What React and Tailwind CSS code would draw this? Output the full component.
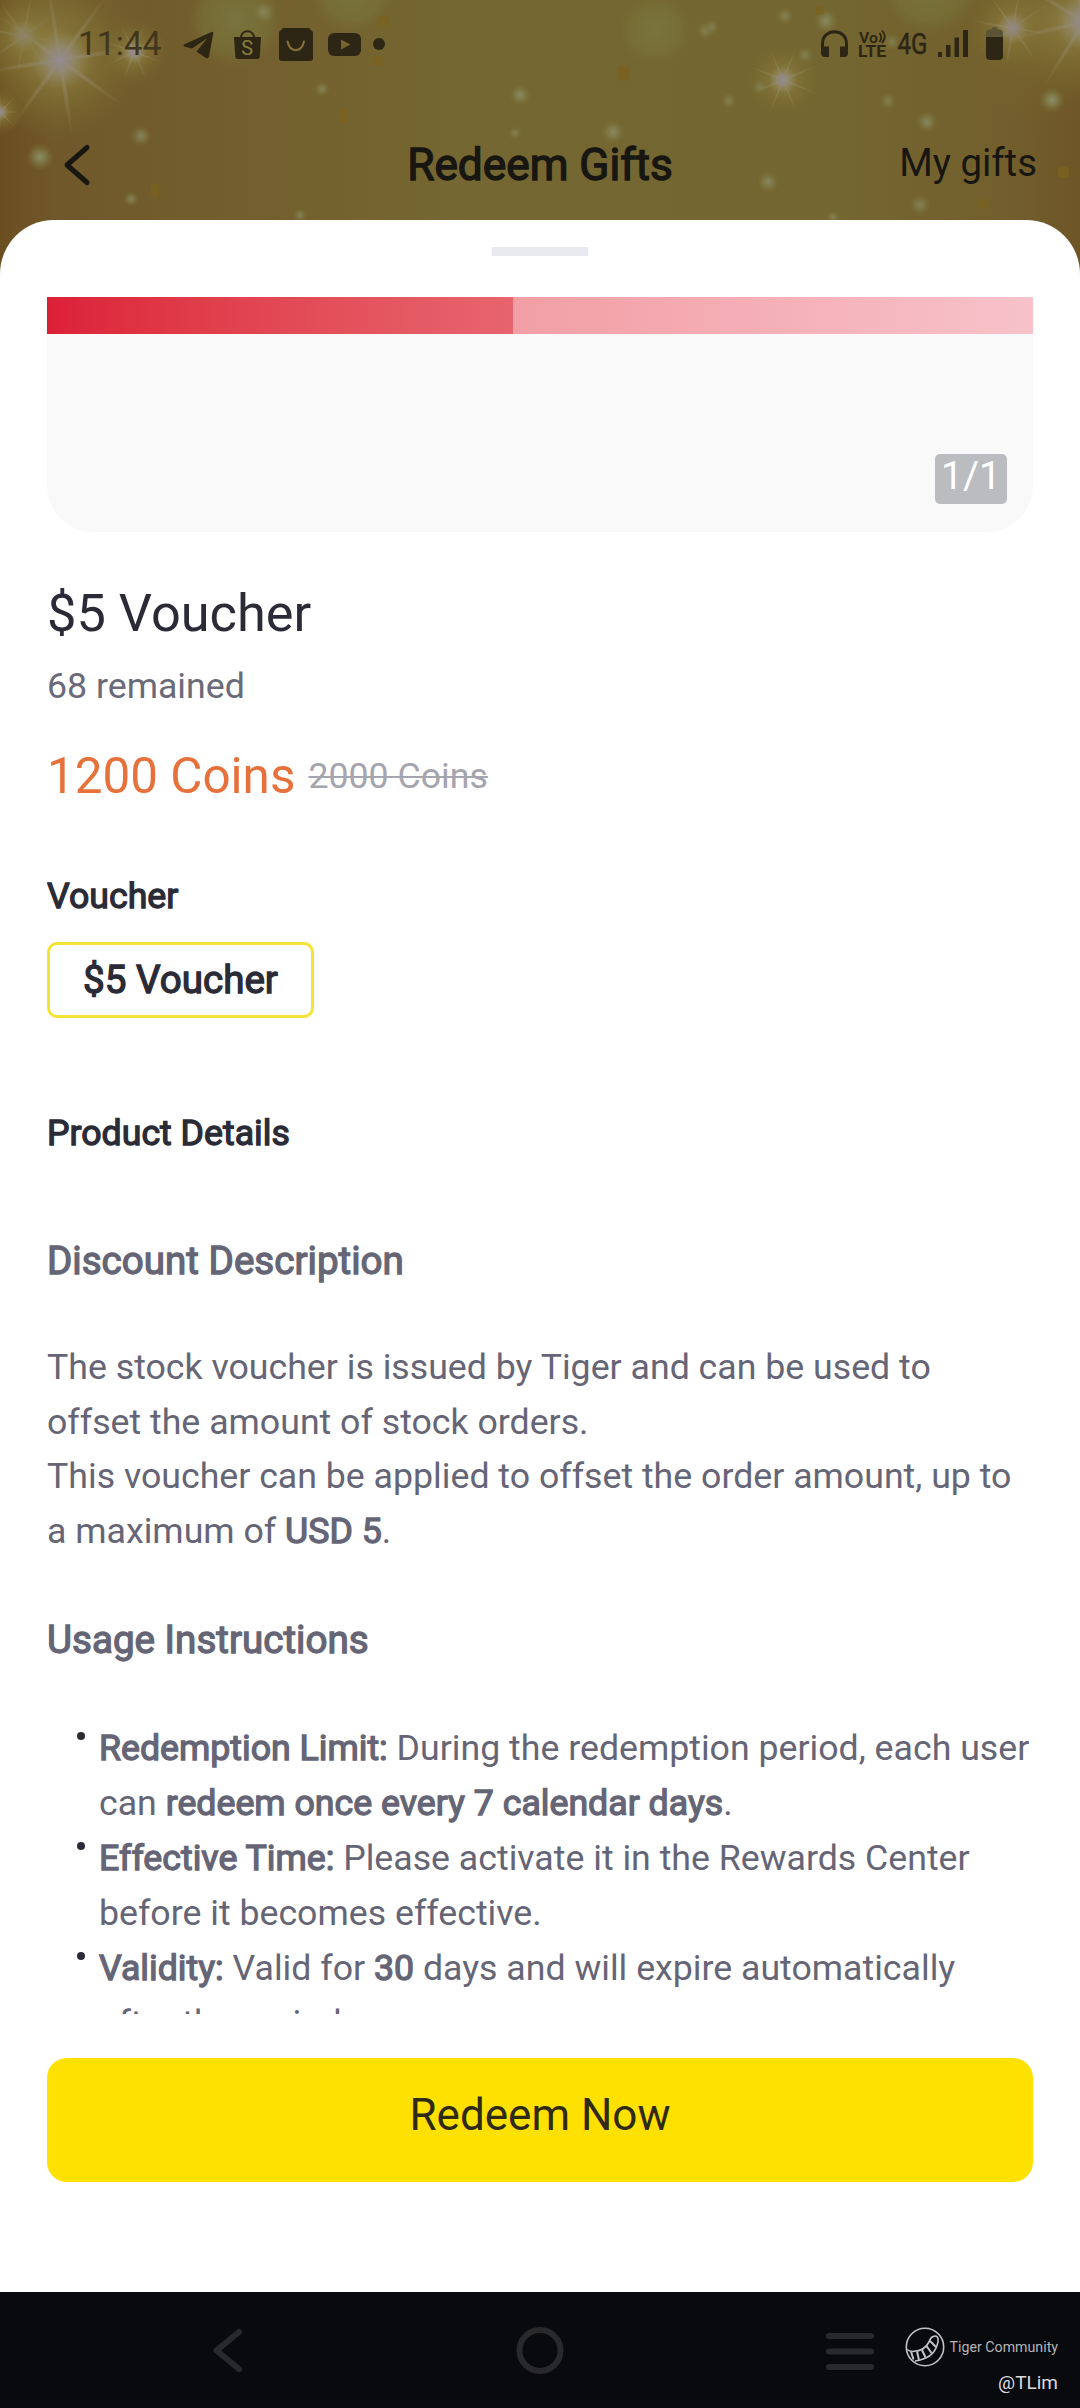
const DARK = '#2e2615'

// x, y, radius, opacity of the soft light dots behind the header
const sparkles = [
  [40, 157, 14, 0.8],
  [141, 136, 11, 0.6],
  [131, 199, 8, 0.6],
  [322, 89, 8, 0.6],
  [300, 215, 7, 0.55],
  [520, 95, 11, 0.7],
  [515, 133, 7, 0.5],
  [613, 132, 12, 0.7],
  [768, 182, 11, 0.65],
  [729, 101, 8, 0.45],
  [927, 122, 11, 0.7],
  [920, 205, 11, 0.55],
  [1052, 100, 13, 0.85],
  [888, 101, 9, 0.45],
  [833, 217, 7, 0.5],
  [705, 31, 9, 0.45],
  [712, 27, 8, 0.4],
  [785, 16, 9, 0.5],
  [826, 21, 12, 0.7],
  [805, 55, 9, 0.45],
  [892, 42, 9, 0.45],
  [760, 87, 8, 0.4],
  [264, 12, 12, 0.55],
]

const confetti = [
  [339, 108, 9, 15],
  [151, 184, 8, 13],
  [378, 16, 12, 10],
  [372, 56, 12, 10],
  [618, 66, 11, 15],
  [815, 6, 9, 9],
  [1058, 167, 11, 11],
  [977, 199, 11, 9],
]

const Star = ({ x, y, r, rotate = 0 }) => (
  <g transform={`translate(${x} ${y}) rotate(${rotate})`}>
    <circle r={r} fill="url(#halo)" />
    {[0, 45, 90, 135].map((a) => (
      <ellipse key={a} rx={r * 0.95} ry={r * 0.04} fill="url(#ray)" transform={`rotate(${a})`} />
    ))}
    <circle r={r * 0.36} fill="url(#core)" />
  </g>
)

const Backdrop = () => (
  <svg className="absolute inset-0" width="1080" height="290" viewBox="0 0 1080 290">
    <defs>
      <linearGradient id="gold">
        <stop offset="0" stopColor="#6a4e20" />
        <stop offset="0.05" stopColor="#70582a" />
        <stop offset="0.25" stopColor="#73602e" />
        <stop offset="0.42" stopColor="#756731" />
        <stop offset="0.78" stopColor="#746631" />
        <stop offset="0.94" stopColor="#725e2c" />
        <stop offset="1" stopColor="#6e5526" />
      </linearGradient>
      <radialGradient id="halo">
        <stop offset="0" stopColor="#98905a" stopOpacity="0.85" />
        <stop offset="0.4" stopColor="#88793a" stopOpacity="0.55" />
        <stop offset="1" stopColor="#78682c" stopOpacity="0" />
      </radialGradient>
      <radialGradient id="ray">
        <stop offset="0" stopColor="#98907c" stopOpacity="0.75" />
        <stop offset="0.6" stopColor="#8f8460" stopOpacity="0.4" />
        <stop offset="1" stopColor="#8c8050" stopOpacity="0" />
      </radialGradient>
      <radialGradient id="core">
        <stop offset="0" stopColor="#938b92" />
        <stop offset="0.4" stopColor="#938a80" stopOpacity="0.7" />
        <stop offset="1" stopColor="#928858" stopOpacity="0" />
      </radialGradient>
      <radialGradient id="dot">
        <stop offset="0" stopColor="#8c916c" />
        <stop offset="0.45" stopColor="#868555" stopOpacity="0.65" />
        <stop offset="1" stopColor="#7c743a" stopOpacity="0" />
      </radialGradient>
      <radialGradient id="bokeh">
        <stop offset="0" stopColor="#7a7740" stopOpacity="0.85" />
        <stop offset="0.7" stopColor="#787239" stopOpacity="0.6" />
        <stop offset="1" stopColor="#776b33" stopOpacity="0" />
      </radialGradient>
    </defs>
    <rect width="1080" height="290" fill="url(#gold)" />
    <circle cx="236" cy="20" r="48" fill="url(#bokeh)" />
    <circle cx="352" cy="-8" r="42" fill="url(#bokeh)" />
    <circle cx="655" cy="30" r="36" fill="url(#bokeh)" />
    <circle cx="930" cy="-14" r="50" fill="url(#bokeh)" />
    <circle cx="40" cy="30" r="110" fill="url(#halo)" opacity="0.45" />
    <circle cx="1050" cy="20" r="110" fill="url(#halo)" opacity="0.45" />
    <Star x={24} y={36} r={44} rotate={10} />
    <Star x={60} y={60} r={82} rotate={36} />
    <Star x={134} y={52} r={34} rotate={20} />
    <Star x={0} y={112} r={24} />
    <Star x={783} y={80} r={38} rotate={22} />
    <Star x={1013} y={28} r={44} rotate={10} />
    <Star x={1084} y={22} r={80} rotate={32} />
    {sparkles.map(([x, y, r, o]) => (
      <circle key={`${x}-${y}`} cx={x} cy={y} r={r} fill="url(#dot)" opacity={o + 0.15} />
    ))}
    {confetti.map(([x, y, w, h]) => (
      <rect key={`${x}-${y}`} x={x} y={y} width={w} height={h} rx="3" fill="#7c621c" opacity="0.7" />
    ))}
  </svg>
)

const StatusBar = () => (
  <div className="flex h-[88px] items-center justify-between pr-[74px] pl-[78px]">
    <div className="flex items-center">
      <span className="w-[105px] text-[33.5px] leading-[40px] text-[#3f361c]">11:44</span>
      <svg width="204" height="40" viewBox="183 24 204 40" fill={DARK}>
        <path d="M184 44.500 211.500 32q2-.6 1.700 1.500L209 56.500q-.8 2.500-3 1.500L196.500 51.500 207 38.500 192 48.500 184 46.500q-1-1 0-2Z" />
        <path d="M234 37h27l-1.200 20q-.2 2-2.300 2h-20q-2 0-2.200-2Z" />
        <path d="M241 38c0-9 13-9 13 0" fill="none" stroke={DARK} strokeWidth="2" />
        <text x="247.3" y="55" fontSize="20" textAnchor="middle" fill="#85803c">S</text>
        <path d="M283 28h26l4 4v26q0 3-3 3h-28q-3 0-3-3V32Z" />
        <path d="M287.500 41.500c2.500 11.500 14 11.500 16.500 0" fill="none" stroke="#85743a" strokeWidth="2" strokeLinecap="round" />
        <rect x="328" y="33" width="33" height="23" rx="6" />
        <path d="m341 39.500 9.500 5-9.500 5Z" fill="#766530" />
        <circle cx="379" cy="44" r="6" />
      </svg>
    </div>
    <svg width="186" height="40" viewBox="820 24 186 40" fill={DARK}>
      <path d="M822.500 50v-6c0-16.500 24-16.500 24 0v6" fill="none" stroke={DARK} strokeWidth="3" />
      <path d="M821 46.500h8V57h-4q-4 0-4-4ZM840 46.500h8V53q0 4-4 4h-4Z" />
      <text x="859" y="42.500" fontSize="15.500" fontWeight="600" textLength="19" lengthAdjust="spacingAndGlyphs">Vo</text>
      <path d="M879.500 33q3.500 4.500 0 9M882 30.500q5.500 6 0 12.500" fill="none" stroke={DARK} strokeWidth="1.800" />
      <text x="858" y="57" fontSize="16" fontWeight="700" textLength="28" lengthAdjust="spacingAndGlyphs">LTE</text>
      <text x="897.500" y="53.500" fontSize="29.500" textLength="30" lengthAdjust="spacingAndGlyphs" stroke={DARK} strokeWidth="0.5">4G</text>
      <path d="M938 52h4v5h-4ZM946 45h4.500v12H946ZM954.500 37.500h4.500v19.500h-4.500ZM963 30h5v27h-5Z" />
      <path d="M986 37v-4q0-3 3-3.500h2.500q0-2.500 2.500-2.500h1q2.500 0 2.500 2.500h2.500q3 .5 3 3.500v4Z" fill="#5c5335" />
      <path d="M986 37h17v19q0 4-4 4h-9q-4 0-4-4Z" />
    </svg>
  </div>
)

const Header = () => (
  <div className="grid grid-cols-[1fr_auto_1fr] items-start px-[43px] pt-[53px]">
    <svg className="ml-[19px]" width="32" height="48" viewBox="62 141 32 48" fill="none" stroke="#171611" strokeWidth="5" strokeLinecap="round" strokeLinejoin="round">
      <path d="M87 147.500 67 165 87 182.500" />
    </svg>
    <h1 className="text-[44.2px] leading-[48px] text-[#171611] [-webkit-text-stroke:1.4px_#171611]">Redeem Gifts</h1>
    <span className="text-right text-[38.4px] leading-[44px] text-[#171611]">My gifts</span>
  </div>
)

const Strong = ({ children }) => (
  <span className="[-webkit-text-stroke:1.3px_currentColor]">{children}</span>
)

const Item = ({ children }) => (
  <li className="relative pl-[52px]">
    <span className="absolute top-[11px] left-[30px] h-2 w-2 rounded-full bg-[#2b2b37]" />
    {children}
  </li>
)

const Sheet = () => (
  <div className="relative mt-[30px] flex h-[2072px] flex-col rounded-t-[54px] bg-white px-[47px] pt-[27px]">
    <div className="h-[9px] w-24 self-center bg-[#e9eaf0]" />

    <div className="-mr-6 mt-[41px] h-[1717px] overflow-hidden pr-6">
      <div className="relative h-[235px] overflow-hidden rounded-b-[46px] bg-[#f9f9f9]">
        <div className="flex h-[37px]">
          <div className="w-[466px] bg-linear-to-r from-[#dc1f38] to-[#e7656e]" />
          <div className="flex-1 bg-linear-to-r from-[#f29ea5] to-[#f7c2ca]" />
        </div>
        <span className="absolute right-[26px] bottom-7 h-[50px] w-[72px] rounded-[5px] bg-[#bbbcc0] text-center text-[39px] leading-[44px] text-white">
          1/1
        </span>
      </div>

      <h2 className="mt-[51px] text-[52.3px] leading-[60px] text-[#2b2b37]">$5 Voucher</h2>
      <p className="mt-[21px] text-[35.7px] leading-[44px] text-[#6a6a79]">68 remained</p>
      <div className="mt-[38px] flex items-center gap-[13px] leading-[60px]">
        <span className="text-[49.4px] text-[#e7713a]">1200 Coins</span>
        <span className="text-[35.7px] text-[#a5a5af] line-through decoration-2">2000 Coins</span>
      </div>

      <h3 className="mt-[68px] text-[35.7px] leading-[44px] text-[#2b2b37]"><Strong>Voucher</Strong></h3>
      <button type="button" className="mt-6 block h-[76px] w-[267px] rounded-[10px] border-3 border-[#f3e336] text-[38.6px] leading-[70px] text-[#2b2b37]">
        <Strong>$5 Voucher</Strong>
      </button>

      <h3 className="mt-[93px] text-[35.7px] leading-[44px] text-[#2b2b37]"><Strong>Product Details</Strong></h3>

      <div className="text-[35.7px] text-[#656576]">
        <h4 className="mt-[78px] text-[38.6px] leading-[56px]"><Strong>Discount Description</Strong></h4>
        <p className="mt-[51px] leading-[54.7px] whitespace-nowrap">
          The stock voucher is issued by Tiger and can be used to<br />
          offset the amount of stock orders.<br />
          This voucher can be applied to offset the order amount, up to<br />
          a maximum of <Strong>USD 5</Strong>.
        </p>
        <h4 className="mt-[53px] text-[38.6px] leading-[56px]"><Strong>Usage Instructions</Strong></h4>
        <ul className="mt-[53px] leading-[55px] whitespace-nowrap">
          <Item>
            <Strong>Redemption Limit:</Strong> During the redemption period, each user<br />
            can <Strong>redeem once every 7 calendar days</Strong>.
          </Item>
          <Item>
            <Strong>Effective Time:</Strong> Please activate it in the Rewards Center<br />
            before it becomes effective.
          </Item>
          <Item>
            <Strong>Validity:</Strong> Valid for <Strong>30</Strong> days and will expire automatically<br />
            after the period.
          </Item>
        </ul>
      </div>
    </div>

    <button type="button" className="mt-11 h-[124px] rounded-[20px] bg-[#fee101] pb-[10px] text-[44px] leading-[52px] text-[#2f2a12]">
      Redeem Now
    </button>
  </div>
)

const NavBar = () => (
  <div className="relative h-[116px] bg-[#090a0d]">
    <svg width="1080" height="116" viewBox="0 2292 1080 116" fill="none" stroke="#29292b" strokeWidth="6" strokeLinecap="round" strokeLinejoin="round">
      <path d="M239 2332 216.500 2350.500 239 2369" />
      <circle cx="540" cy="2350.500" r="20.500" />
      <path d="M829 2336h42M829 2351.500h42M829 2367h42" />
    </svg>
    <div className="absolute top-[35px] right-[22px] flex flex-col items-end">
      <div className="flex h-10 items-center gap-[5px]">
        <svg width="40" height="40" viewBox="0 0 40 40" fill="none" stroke="#c4c4c6" strokeWidth="1.600" strokeLinejoin="round">
          <circle cx="20" cy="20" r="18.700" />
          <path d="M2 22.500q3 2.500 7 1.800 10 0 15-9.300 1.500-4.500 4-5.500 4-1.500 5 2 .5 3-1 7-4 13-22 15.500" />
          <path d="M6 24.500l2.500 8M12 24.500l2 8.500M17 23l3.500 7.500M21.500 19l5 7M25 14l6 6" strokeWidth="2" />
        </svg>
        <span className="text-[14.2px] leading-[20px] text-[#b4b4b6]">Tiger Community</span>
      </div>
      <span className="mt-1 text-[19px] leading-[24px] text-[#dcdcde]">@TLim</span>
    </div>
  </div>
)

export default function App() {
  return (
    <div className="relative h-[2408px] w-[1080px] overflow-hidden bg-white font-[Roboto,sans-serif]">
      <Backdrop />
      <div className="relative h-[190px]">
        <StatusBar />
        <Header />
      </div>
      <Sheet />
      <NavBar />
    </div>
  )
}
